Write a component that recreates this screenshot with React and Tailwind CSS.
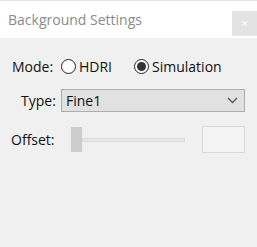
import React from 'react';

const font = { fontFamily: '"Open Sans", "Noto Sans", sans-serif' };

const Radio = ({ checked, label }) => (
  <label className="flex items-center gap-[3px]">
    <span className="flex h-[15px] w-[15px] items-center justify-center rounded-full border border-[#222] bg-white">
      {checked && <span className="h-[9px] w-[9px] rounded-full bg-[#333]" />}
    </span>
    <span>{label}</span>
  </label>
);

export default function App() {
  return (
    <div className="flex h-[247px] w-[257px] flex-col bg-[#f0f0f0] text-[14px] text-[#111]" style={font}>
      {/* Title bar */}
      <div className="flex h-[38px] items-center justify-between border-t border-[#e6e6e6] bg-white pl-[8px]">
        <span className="text-[14px] text-[#8a8a8a]">Background Settings</span>
        <button className="mt-[7px] flex h-[25px] w-[25px] items-center justify-center bg-[#e3e3e3] text-[13px] leading-none text-white">
          ×
        </button>
      </div>

      {/* Mode */}
      <div className="mt-[18px] flex items-center pl-[12px]">
        <span className="w-[49px]">Mode:</span>
        <Radio label="HDRI" />
        <span className="w-[22px]" />
        <Radio checked label="Simulation" />
      </div>

      {/* Type */}
      <div className="mt-[12px] flex items-center pl-[21px]">
        <span className="w-[40px]">Type:</span>
        <div className="flex h-[23px] w-[184px] items-center justify-between border border-[#adadad] bg-[#e1e1e1] pl-[4px] pr-[6px]">
          <span>Fine1</span>
          <svg width="11" height="7" viewBox="0 0 11 7" fill="none">
            <path d="M1 1l4.5 4.5L10 1" stroke="#555" strokeWidth="1.3" />
          </svg>
        </div>
      </div>

      {/* Offset */}
      <div className="mt-[14px] flex items-center pl-[11px]">
        <span className="w-[60px]">Offset:</span>
        <div className="flex items-center">
          <div className="h-[25px] w-[11px] bg-[#cccccc]" />
          <div className="h-[4px] w-[103px] border border-[#dadada] bg-[#e7e7e7]" />
        </div>
        <div className="ml-[17px] h-[27px] w-[43px] border border-[#d9d9d9] bg-[#f3f3f3]" />
      </div>
    </div>
  );
}
